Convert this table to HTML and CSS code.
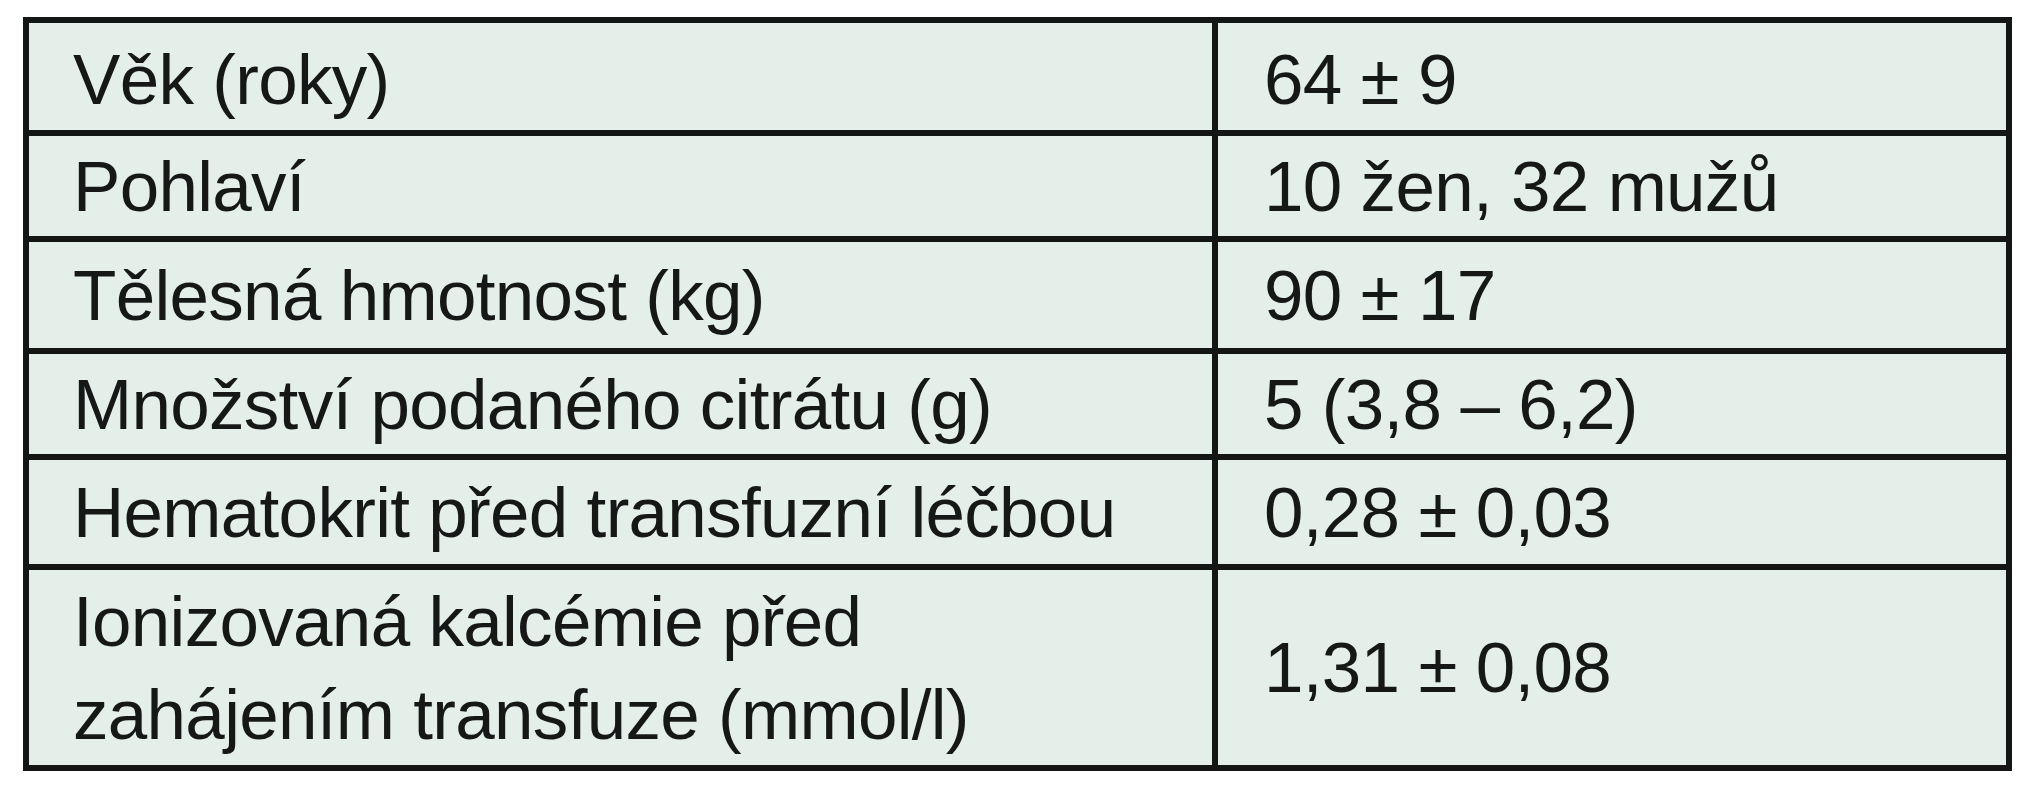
FILE: index.html
```html
<!DOCTYPE html>
<html lang="cs">
<head>
<meta charset="utf-8">
<title>Charakteristika souboru</title>
<link rel="stylesheet" href="styles.css">
</head>
<body>
<div class="page">
  <div class="table" role="table">
    <div class="cell label r1">Věk (roky)</div>
    <div class="cell value r1">64 ± 9</div>
    <div class="cell label">Pohlaví</div>
    <div class="cell value">10 žen, 32 mužů</div>
    <div class="cell label">Tělesná hmotnost (kg)</div>
    <div class="cell value">90 ± 17</div>
    <div class="cell label">Množství podaného citrátu (g)</div>
    <div class="cell value">5 (3,8 – 6,2)</div>
    <div class="cell label">Hematokrit před transfuzní léčbou</div>
    <div class="cell value">0,28 ± 0,03</div>
    <div class="cell label">Ionizovaná kalcémie před<br>zahájením transfuze (mmol/l)</div>
    <div class="cell value">1,31 ± 0,08</div>
  </div>
</div>
</body>
</html>
```
FILE: styles.css
```css
html, body {
  margin: 0;
  padding: 0;
  background: #ffffff;
}

.page {
  padding: 17px 0 0 23px;
}

.table {
  display: grid;
  grid-template-columns: 1189px 794px;
  grid-template-rows: 113px 106px 112px 106px 110px 201px;
  width: 1989px;
  box-sizing: border-box;
  border-top: 6px solid #131614;
  border-left: 6px solid #131614;
  background: #e5efea;
  font-family: "Liberation Sans", Arial, sans-serif;
  font-size: 71px;
  letter-spacing: -0.7px;
  line-height: 93px;
  color: #161817;
}

.cell {
  box-sizing: border-box;
  display: flex;
  align-items: center;
  padding-left: 44px;
  border-right: 6px solid #131614;
  border-bottom: 6px solid #131614;
  white-space: nowrap;
}

.r1 {
  padding-top: 6px;
}

.value {
  padding-left: 46px;
}
```
